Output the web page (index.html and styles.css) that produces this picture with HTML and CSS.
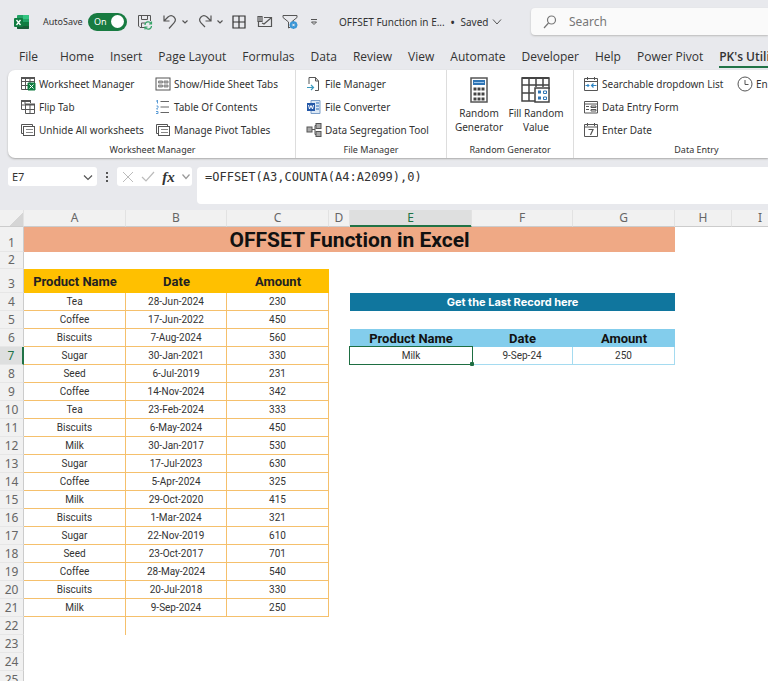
FILE: index.html
```
<!DOCTYPE html>
<html lang="en">
<head>
<meta charset="utf-8">
<title>OFFSET Function in Excel</title>
<link rel="stylesheet" href="styles.css">
</head>
<body>
<div class="app">
  <header class="titlebar">
    <svg class="logo" width="16" height="16" viewBox="0 0 16 16"><rect x="3" y="1" width="12" height="14" rx="1" fill="#21a366"/><path d="M9 1h5a1 1 0 0 1 1 1v3H9z" fill="#33c481"/><path d="M3 8h12v6a1 1 0 0 1-1 1H4a1 1 0 0 1-1-1z" fill="#185c37"/><path d="M9 8h6v4H9z" fill="#107c41"/><rect y="4" width="9" height="9" rx="1" fill="#107c41"/><path d="M2.500 6l4 5M6.500 6l-4 5" stroke="#fff" stroke-width="1.300"/></svg>
    <label class="autosave"><span>AutoSave</span><input type="checkbox" checked><span class="switch"><span>On</span><i></i></span></label>
    <div class="quick">
      <button class="qb save" aria-label="Save"><svg width="16" height="16" viewBox="0 0 16 16" fill="none" stroke="#555"><path d="M8 13.500H3L1.500 12V1.500h12V7M4.500 1.500v4h6v-4M4.500 13V9H8"/><path d="M8 11a3.200 3.200 0 0 1 6-1.500M14.500 7.500v2.500H12M14.500 12a3.200 3.200 0 0 1-6 1.500M8 15.500V13h2.500" stroke="#36a368" stroke-width="1.200"/></svg></button>
      <button class="qb undo" aria-label="Undo"><svg width="16" height="16" viewBox="0 0 16 16" fill="none" stroke="#555" stroke-width="1.200"><path d="M2 1.500V7h5.500M2 7l4-4c2-1.800 4.500-1.500 6 0s1.700 4 0 5.800L7 14.500"/></svg></button>
      <button class="qb arrow" aria-label="Undo list"><svg width="6" height="4" viewBox="0 0 6 4" fill="none" stroke="#555" stroke-width="1.200"><path d="M.5.5L3 3 5.500.5"/></svg></button>
      <button class="qb redo" aria-label="Redo"><svg width="16" height="16" viewBox="0 0 16 16" fill="none" stroke="#555" stroke-width="1.200"><path d="M14 1.500V7H8.500M14 7l-4-4C8 1.200 5.500 1.500 4 3s-1.700 4 0 5.800L8 13"/></svg></button>
      <button class="qb arrow" aria-label="Redo list"><svg width="6" height="4" viewBox="0 0 6 4" fill="none" stroke="#555" stroke-width="1.200"><path d="M.5.5L3 3 5.500.5"/></svg></button>
      <button class="qb borders" aria-label="Borders"><svg width="14" height="14" viewBox="0 0 14 14" fill="none" stroke="#333" stroke-width="1.200"><path d="M1 1h12v12H1zM7 1v12M1 7h12"/></svg></button>
      <button class="qb mail" aria-label="Email"><svg width="16" height="14" viewBox="0 0 16 14" fill="none" stroke="#555" stroke-width="1.200"><path d="M7 2.500h7.500v9H1.500V7M5 8l2 1 7-6M1 6.500v-5h4v5zM3 2v5"/></svg></button>
      <button class="qb filter" aria-label="Filter"><svg width="16" height="16" viewBox="0 0 16 16" fill="none" stroke="#555"><path d="M1 1.500h14v2L9.500 8M1 1.500v2L6.500 8v6l2-1"/><circle cx="11.500" cy="11" r="2.800" stroke="#3a96d6" stroke-width="2"/><path d="M11.500 7v8M7.500 11h8M9 8.500l5 5M14 8.500l-5 5" stroke="#3a96d6"/><circle cx="11.500" cy="11" r="1" fill="#e8e9ed" stroke="none"/></svg></button>
      <button class="qb more" aria-label="Customize toolbar"><svg width="8" height="8" viewBox="0 0 8 8" fill="none" stroke="#555"><path d="M1 1.500h6M1.500 4L4 6.500 6.500 4z"/></svg></button>
    </div>
    <button class="docname">OFFSET Function in E... <b>•</b> Saved <svg width="10" height="6" viewBox="0 0 10 6" fill="none" stroke="#555"><path d="M1 .5L5 5 9 .5"/></svg></button>
    <label class="search"><svg width="14" height="14" viewBox="0 0 14 14" fill="none" stroke="#777" stroke-width="1.200"><circle cx="8.500" cy="5" r="4"/><path d="M5.500 8L1 13"/></svg><input type="search" placeholder="Search" aria-label="Search"></label>
  </header>

  <nav class="tabs">
    <button>File</button><button>Home</button><button>Insert</button><button>Page Layout</button><button>Formulas</button><button>Data</button><button>Review</button><button>View</button><button>Automate</button><button>Developer</button><button>Help</button><button>Power Pivot</button><button class="active">PK's Utility</button>
  </nav>

  <section class="ribbon">
    <div class="group g-sheets">
      <div class="tools">
        <button><svg width="16" height="16" viewBox="0 0 16 16" fill="none" stroke="#555"><path d="M1.500 1.500h13v12h-13zM1.500 5.500h13M1.500 9.500H8M5.500 2v11M10 2v5"/><path d="M1 2h14" stroke-width="2"/><path d="M8 7h7v7H8z" fill="#107c41" stroke="#107c41"/><path d="M9.500 8.500l4 4M13.500 8.500l-4 4" stroke="#fff"/></svg>Worksheet Manager</button>
        <button><svg width="16" height="16" viewBox="0 0 16 16" fill="none" stroke="#555"><rect x="1" y="2" width="14" height="12"/><path d="M3.500 5h4v2h-4zM9 5h4v2H9zM3.500 9h4v2h-4zM9 9h4v2H9z" fill="#aaa" stroke="#888"/></svg>Show/Hide Sheet Tabs</button>
        <button><svg width="16" height="16" viewBox="0 0 16 16" fill="none" stroke="#555"><path d="M5 10.500H1.500v-9h9V4M1.500 6H5M5 2v3"/><path d="M1 2h10M5 5.500h10" stroke-width="2"/><path d="M5.500 5.500h9v9h-9zM5.500 10.500h9M10 6v8"/></svg>Flip Tab</button>
        <button><svg width="16" height="16" viewBox="0 0 16 16" fill="none" stroke="#666"><path d="M5.500 2.500H14M5.500 8H14M5.500 13.500H14"/><path d="M2.500 1v3.500M1 2h1M1.500 7h1.500v1.500L1.500 10H3M1 12.500h2v2H1" stroke="#5b9bd5"/></svg>Table Of Contents</button>
        <button><svg width="16" height="16" viewBox="0 0 16 16" fill="none" stroke="#555"><path d="M3 11.500H1.500v-9h11V4"/><rect x="3.500" y="4.500" width="11" height="9"/><path d="M6 7.500h7M6 10.500h7" stroke="#888"/></svg>Unhide All worksheets</button>
        <button><svg width="16" height="16" viewBox="0 0 16 16" fill="none" stroke="#555"><path d="M3 11.500H1.500v-9h11V4"/><rect x="3.500" y="4.500" width="11" height="9"/><path d="M6 7.500h7M6 10.500h7" stroke="#888"/></svg>Manage Pivot Tables</button>
      </div>
      <h2>Worksheet Manager</h2>
    </div>
    <div class="group g-files">
      <div class="tools">
        <button><svg width="16" height="16" viewBox="0 0 16 16" fill="none" stroke="#555"><path d="M3 8V1.500h6.500l3 3.500v9.500H9M9.500 1.500V5h3"/><path d="M1 11.500h6M5 9l2.500 2.500L5 14" stroke="#3a9abf" stroke-width="1.200"/></svg>File Manager</button>
        <button><svg width="16" height="16" viewBox="0 0 16 16" fill="none"><path d="M5 1.500h9v13H5z" fill="#dce8f5" stroke="#7c9fc9"/><path d="M10 4h3M10 7h3M10 10h3" stroke="#2b6cb8"/><rect x="1" y="4" width="8" height="8" fill="#2458a8"/><path d="M2.500 6l1 4L5 6.500 6.500 10l1-4" stroke="#fff"/></svg>File Converter</button>
        <button><svg width="16" height="16" viewBox="0 0 16 16" fill="#aaa" stroke="#555"><path d="M6 7.500h3M9 3.500v9M9 3.500h1M9 12.500h1" fill="none"/><rect x="1" y="5" width="5" height="5"/><rect x="10" y="1.500" width="5" height="5"/><rect x="10" y="9.500" width="5" height="5"/></svg>Data Segregation Tool</button>
      </div>
      <h2>File Manager</h2>
    </div>
    <div class="group g-random">
      <div class="bigtools">
        <button><svg width="18" height="26" viewBox="0 0 18 26"><rect x="1" y="1" width="16" height="24" fill="#fff" stroke="#555" stroke-width="1.500"/><path d="M3 3h12v5H3z" fill="#2f75b5"/><path d="M4 5.500h10" stroke="#9dc6ec"/><path d="M3.500 12h11M3.500 17h11M3.500 22h11" stroke="#444" stroke-width="3" stroke-dasharray="3 1"/></svg>Random<br>Generator</button>
        <button><svg width="30" height="28" viewBox="0 0 30 28" fill="none" stroke="#444" stroke-width="1.500"><path d="M14 25H1V2h27v11M1 9h27M1 17h12M8 2v23M15 2v9M22 2v9"/><path d="M1 2h27" stroke-width="2"/><rect x="14" y="12" width="14" height="14" fill="#fff"/><path d="M17 16h3M17 22h3" stroke="#2f75b5" stroke-width="3"/><path d="M22.500 15h3v2.500h-3zM22.500 21h3v2.500h-3z" stroke="#2f75b5" stroke-width="1"/></svg>Fill Random<br>Value</button>
      </div>
      <h2>Random Generator</h2>
    </div>
    <div class="group g-entry">
      <div class="tools">
        <button><svg width="16" height="16" viewBox="0 0 16 16" fill="none" stroke="#555"><path d="M1.500 2.500h13v12h-13zM1.500 5.500h13M4.500 1v3M11.500 1v3"/><path d="M2.500 9.500h4M5 8v3M8 9.500h5.500M10.500 7.500l-2 2 2 2" stroke="#2f86c5" stroke-width="1.200"/></svg>Searchable dropdown List</button>
        <button><svg width="16" height="16" viewBox="0 0 16 16" fill="none" stroke="#555"><circle cx="8" cy="8" r="7"/><path d="M8 4v4.500h3.500"/></svg>En</button>
        <button><svg width="16" height="16" viewBox="0 0 16 16" fill="none" stroke="#555"><path d="M1.500 2.500h13v11.500h-13zM1.500 5h13M3 7.500h3M3 10.500h3M8 7h5v1.500H8zM8 10.500h5V12H8z"/></svg>Data Entry Form</button>
        <span></span>
        <button><svg width="16" height="16" viewBox="0 0 16 16" fill="none" stroke="#555"><path d="M1.500 2.500h13v12h-13zM1.500 5h13M4.500 1v3M11.500 1v3"/><path d="M5.500 7.500h4.500L7.500 13" stroke-width="1.200"/></svg>Enter Date</button>
      </div>
      <h2>Data Entry</h2>
    </div>
  </section>

  <section class="formula">
    <div class="namebox"><input value="E7" aria-label="Name box"><button aria-label="Names"><svg width="10" height="6" viewBox="0 0 10 6" fill="none" stroke="#555" stroke-width="1.200"><path d="M1 .5L5 4.500 9 .5"/></svg></button></div>
    <span class="dots"></span>
    <div class="fx">
      <button aria-label="Cancel"><svg width="12" height="12" viewBox="0 0 12 12" stroke="#bbb"><path d="M1 1l10 10M11 1L1 11"/></svg></button>
      <button aria-label="Enter"><svg width="14" height="12" viewBox="0 0 14 12" fill="none" stroke="#bbb" stroke-width="1.200"><path d="M1 6l4 4 8-9"/></svg></button>
      <button class="fn" aria-label="Insert function">fx</button>
      <button aria-label="Function list"><svg width="8" height="6" viewBox="0 0 8 6" fill="none" stroke="#999" stroke-width="1.200"><path d="M.5.5L4 4.500 7.500.5"/></svg></button>
    </div>
    <textarea class="fbar" aria-label="Formula" rows="1">=OFFSET(A3,COUNTA(A4:A2099),0)</textarea>
  </section>

  <main class="sheet">
    <table>
      <colgroup><col class="c-n"><col class="c-w"><col class="c-m"><col class="c-w"><col class="c-d"><col class="c-e"><col class="c-m"><col class="c-w"><col class="c-h"><col class="c-h"><col></colgroup>
      <thead><tr><th class="corner"></th><th>A</th><th>B</th><th>C</th><th>D</th><th class="sel">E</th><th>F</th><th>G</th><th>H</th><th>I</th><th></th></tr></thead>
      <tbody>
        <tr class="r1"><th>1</th><td colspan="7" class="title">OFFSET Function in Excel</td></tr>
        <tr class="r2"><th>2</th></tr>
        <tr class="r3"><th>3</th><td class="yh">Product Name</td><td class="yh">Date</td><td class="yh">Amount</td></tr>
        <tr><th>4</th><td class="o">Tea</td><td class="o">28-Jun-2024</td><td class="o">230</td><td></td><td colspan="3" class="banner">Get the Last Record here</td></tr>
        <tr><th>5</th><td class="o">Coffee</td><td class="o">17-Jun-2022</td><td class="o">450</td></tr>
        <tr><th>6</th><td class="o">Biscuits</td><td class="o">7-Aug-2024</td><td class="o">560</td><td></td><td class="bh">Product Name</td><td class="bh">Date</td><td class="bh">Amount</td></tr>
        <tr><th class="sel">7</th><td class="o">Sugar</td><td class="o">30-Jan-2021</td><td class="o">330</td><td></td><td class="b cur">Milk</td><td class="b">9-Sep-24</td><td class="b">250</td></tr>
        <tr><th>8</th><td class="o">Seed</td><td class="o">6-Jul-2019</td><td class="o">231</td></tr>
        <tr><th>9</th><td class="o">Coffee</td><td class="o">14-Nov-2024</td><td class="o">342</td></tr>
        <tr><th>10</th><td class="o">Tea</td><td class="o">23-Feb-2024</td><td class="o">333</td></tr>
        <tr><th>11</th><td class="o">Biscuits</td><td class="o">6-May-2024</td><td class="o">450</td></tr>
        <tr><th>12</th><td class="o">Milk</td><td class="o">30-Jan-2017</td><td class="o">530</td></tr>
        <tr><th>13</th><td class="o">Sugar</td><td class="o">17-Jul-2023</td><td class="o">630</td></tr>
        <tr><th>14</th><td class="o">Coffee</td><td class="o">5-Apr-2024</td><td class="o">325</td></tr>
        <tr><th>15</th><td class="o">Milk</td><td class="o">29-Oct-2020</td><td class="o">415</td></tr>
        <tr><th>16</th><td class="o">Biscuits</td><td class="o">1-Mar-2024</td><td class="o">321</td></tr>
        <tr><th>17</th><td class="o">Sugar</td><td class="o">22-Nov-2019</td><td class="o">610</td></tr>
        <tr><th>18</th><td class="o">Seed</td><td class="o">23-Oct-2017</td><td class="o">701</td></tr>
        <tr><th>19</th><td class="o">Coffee</td><td class="o">28-May-2024</td><td class="o">540</td></tr>
        <tr><th>20</th><td class="o">Biscuits</td><td class="o">20-Jul-2018</td><td class="o">330</td></tr>
        <tr><th>21</th><td class="o">Milk</td><td class="o">9-Sep-2024</td><td class="o">250</td></tr>
        <tr><th>22</th><td class="tail"></td></tr>
        <tr><th>23</th></tr>
        <tr><th>24</th></tr>
        <tr><th>25</th></tr>
      </tbody>
    </table>
  </main>
</div>
</body>
</html>
```
FILE: styles.css
```
* { box-sizing: border-box; }
body { margin: 0; background: #fff; color: #333; font-family: "Noto Sans", "Open Sans", sans-serif; }
button { border: 0; padding: 0; background: none; font: inherit; color: inherit; white-space: nowrap; }
input, textarea { border: 0; padding: 0; margin: 0; background: none; font: inherit; color: inherit; outline: 0; min-width: 0; }
svg { flex: none; }
.app { height: 100vh; overflow: hidden; display: flex; flex-direction: column; background: #e8e9ed; }

.titlebar { display: flex; align-items: center; height: 43px; padding-left: 14px; flex: none; font-size: 10px; }
.logo { margin-right: 13px; }
.autosave { display: flex; align-items: center; width: 84px; justify-content: space-between; font-size: 9px; }
.autosave input { position: absolute; opacity: 0; }
.switch { display: flex; align-items: center; justify-content: space-between; width: 39px; height: 18px; padding: 0 3px 0 6px; border-radius: 9px; background: #187b41; color: #fff; }
.switch i { width: 13px; height: 13px; border-radius: 50%; background: #fff; }
.quick { display: flex; align-items: center; margin-left: 10px; width: 202px; }
.qb { display: flex; }
.undo, .redo { margin-left: 9px; }
.arrow { margin-left: 4px; }
.borders { margin-left: 9px; }
.mail { margin-left: 11px; }
.filter { margin-left: 9px; }
.more { margin-left: 12px; }
.docname { display: flex; align-items: center; gap: 6px; width: 192px; font-size: 10px; }
.docname svg { margin-left: -2px; }
.search { display: flex; align-items: center; gap: 12px; flex: 1; height: 27px; padding-left: 12px; border-radius: 4px 0 0 4px; background: #fafafa; box-shadow: 0 1px 2px #bbb; font-size: 12px; }
.search input { flex: 1; }
.search input::placeholder { color: #777; opacity: 1; }

.tabs { display: flex; gap: 16px; height: 27px; padding-left: 19px; flex: none; overflow: hidden; font-family: "Open Sans", sans-serif; font-size: 12px; }
.tabs button { height: 25px; line-height: 28px; }
.tabs button:first-child { margin-right: 6px; }
.tabs .active { font-weight: 600; border-bottom: 2px solid #217346; }

.ribbon { display: flex; height: 88px; flex: none; margin-left: 8px; overflow: hidden; border-radius: 7px 0 0 7px; background: #fff; box-shadow: 0 1px 2px #aaa; font-size: 10px; }
.group { display: flex; flex-direction: column; flex: none; padding: 2px 0 0 11px; }
.group + .group { border-left: 1px solid #ddd; }
.tools { display: grid; grid-auto-rows: 23px; justify-content: start; }
.tools button { display: flex; align-items: center; gap: 3px; }
.group h2 { margin: auto 10px 0 0; padding-bottom: 1px; font-size: 9px; line-height: 14px; font-weight: 400; text-align: center; }
.g-sheets { width: 287px; padding-left: 12px; }
.g-sheets .tools { grid-template-columns: 135px auto; }
.g-files { width: 151px; padding-left: 10px; }
.g-random { width: 127px; padding-left: 0; }
.g-random h2 { margin-right: 0; }
.bigtools { display: grid; grid-template-columns: 64px 50px; justify-content: start; line-height: 14px; }
.bigtools button { display: flex; flex-direction: column; align-items: center; padding-top: 4px; }
.bigtools svg { height: 28px; margin-bottom: 2px; }
.g-entry { width: 247px; padding-left: 9px; }
.g-entry .tools { grid-template-columns: 154px auto; }

.formula { display: flex; align-items: flex-start; flex: none; padding: 9px 0 6px 8px; font-size: 11px; }
.namebox, .fx { display: flex; align-items: center; height: 19px; border-radius: 3px; background: #fff; }
.namebox { width: 89px; padding: 0 4px; }
.namebox input { flex: 1; }
.dots { width: 2px; height: 10px; margin: 5px 9px; background: repeating-linear-gradient(#555 0 2px, transparent 2px 4px); }
.fx { width: 75px; padding: 0 2px 0 5px; justify-content: space-between; }
.fx button { display: flex; }
.fx .fn { font: italic bold 15px/18px "Liberation Serif", serif; }
.fbar { flex: 1; height: 37px; margin-left: 5px; padding: 3px 8px; border-radius: 4px 0 0 4px; background: #fff; resize: none; overflow: hidden; font: 12px/14px "DejaVu Sans Mono", monospace; }

.sheet { flex: 1; min-height: 0; overflow: hidden; background: #fff; }
table { width: 100%; min-width: 789px; table-layout: fixed; border-collapse: separate; border-spacing: 0; font-family: Roboto, sans-serif; }
.c-n { width: 24px; }
.c-w { width: 102px; }
.c-m { width: 101px; }
.c-d { width: 21px; }
.c-e { width: 122px; }
.c-h { width: 57px; }
th, td { height: 18px; padding: 0; text-align: center; font-size: 10px; line-height: 17px; white-space: nowrap; }
th { font: 400 12px/15px "Noto Sans", sans-serif; color: #666; background: #f1f1f1; }
thead th { height: 17px; border-right: 1px solid #e2e2e2; border-bottom: 1px solid #ccc; line-height: 16px; }
thead .sel { background: #dedfdf; color: #217346; border-bottom-color: #217346; box-shadow: inset 0 -1px #217346; }
thead .corner { background: linear-gradient(135deg, #f1f1f1 65%, #d5d5d5 65%); }
tbody th { vertical-align: bottom; border-right: 1px solid #ccc; border-bottom: 1px solid #e6e6e6; line-height: 17px; }
tbody th.sel { background: #dedfdf; color: #217346; border-right: 2px solid #217346; }
.r1 > * { height: 25px; }
.r2 > * { height: 17px; line-height: 16px; }
.r3 > * { height: 24px; }
.title { padding-top: 1px; background: #efa985; color: #111; font-size: 21px; font-weight: 700; line-height: 24px; }
.yh { padding-top: 2px; background: #ffc000; color: #222; font-size: 13px; font-weight: 700; line-height: 22px; }
.o { border-right: 1px solid #f5c06c; border-bottom: 1px solid #f5c06c; }
.tail { border-right: 1px solid #f5c06c; }
.banner { background: #10769e; color: #fff; font-family: Inter, sans-serif; font-size: 11px; font-weight: 700; }
.bh { background: #83cdec; color: #111; font-size: 13px; font-weight: 700; }
.b { border-right: 1px solid #a5dbf0; border-bottom: 1px solid #a5dbf0; }
.cur { position: relative; border-right: 0; }
.cur::before { content: ""; position: absolute; inset: -1px; border: 1px solid #1e6e42; }
.cur::after { content: ""; position: absolute; right: -2px; bottom: -2px; width: 4px; height: 4px; background: #1e6e42; border-radius: 1px; }
```
